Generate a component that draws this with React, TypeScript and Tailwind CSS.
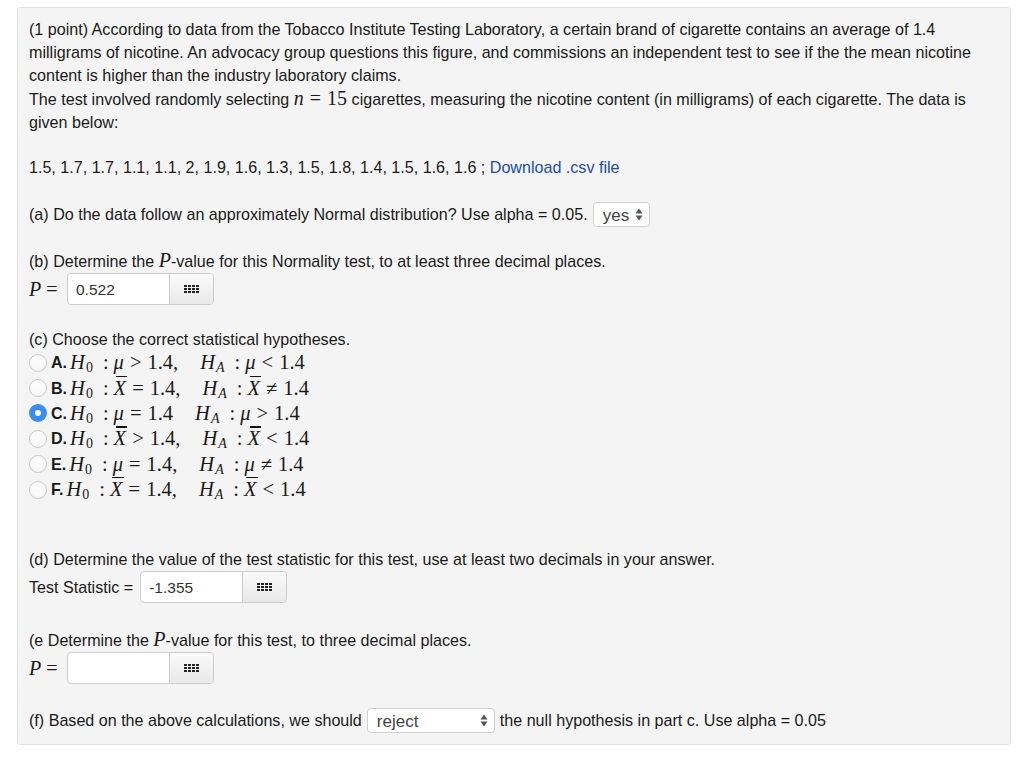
import React from 'react';

const sans = { fontFamily: '"Liberation Sans", Arial, sans-serif' };
const serif = { fontFamily: '"Liberation Serif", "Times New Roman", serif' };

function Mi({ children, bar = false }: { children: React.ReactNode; bar?: boolean }) {
  return (
    <span className={`italic ${bar ? 'relative inline-block' : ''}`}>
      {bar && <span className="absolute left-[2px] right-[-1px] top-[0px] h-[1.3px] bg-[#111]" />}
      {children}
    </span>
  );
}

function H({ sub }: { sub: string }) {
  return (
    <span className="whitespace-nowrap">
      <Mi>H</Mi>
      <sub className={`text-[14px] relative top-[3px] ml-[1px] ${sub === 'A' ? 'italic' : ''}`}>{sub}</sub>
    </span>
  );
}

function GridIcon() {
  const cols = [0, 4, 8, 12];
  const rows = [0, 3, 6];
  return (
    <svg width="15" height="8" viewBox="0 0 15 8" className="block">
      {rows.map((y) =>
        cols.map((x) => <rect key={`${x}-${y}`} x={x} y={y} width="3" height="2" fill="#222" />)
      )}
    </svg>
  );
}

function AnswerBox({ value }: { value: string }) {
  return (
    <div className="flex h-[32px] rounded-[4px] border border-[#cccccc] bg-white overflow-hidden">
      <div className="w-[101px] px-[8px] flex items-center text-[15.5px] text-[#333]">{value}</div>
      <div className="w-[44px] flex items-center justify-center border-l border-[#cccccc] bg-gradient-to-b from-[#fafafa] to-[#e9e9e9]">
        <GridIcon />
      </div>
    </div>
  );
}

function SelectArrows() {
  return (
    <svg width="8" height="13" viewBox="0 0 8 13" className="block">
      <path d="M4 0.5 L7.5 5.5 L0.5 5.5 Z" fill="#555" />
      <path d="M4 12.5 L7.5 7.5 L0.5 7.5 Z" fill="#555" />
    </svg>
  );
}

function Select({ value, width }: { value: string; width: number }) {
  return (
    <div
      className="flex items-center justify-between h-[25px] rounded-[4px] border border-[#d0d0d0] bg-white pl-[9px] pr-[6px] text-[17px] text-[#444]"
      style={{ width }}
    >
      <span className="leading-none relative top-[1px]">{value}</span>
      <SelectArrows />
    </div>
  );
}

function Radio({ checked }: { checked?: boolean }) {
  if (checked) {
    return (
      <span className="w-[18px] h-[18px] rounded-full bg-[#3b8cf5] flex items-center justify-center shrink-0">
        <span className="w-[6px] h-[6px] rounded-full bg-white" />
      </span>
    );
  }
  return <span className="w-[18px] h-[18px] rounded-full border border-[#c8c8c8] bg-gradient-to-b from-white to-[#f6f6f6] shrink-0" />;
}

type Side = { v: 'mu' | 'xbar'; op: string; num: string };
type Option = { letter: string; checked?: boolean; h0: Side; ha: Side };

const options: Option[] = [
  { letter: 'A.', h0: { v: 'mu', op: '>', num: '1.4,' }, ha: { v: 'mu', op: '<', num: '1.4' } },
  { letter: 'B.', h0: { v: 'xbar', op: '=', num: '1.4,' }, ha: { v: 'xbar', op: '≠', num: '1.4' } },
  { letter: 'C.', checked: true, h0: { v: 'mu', op: '=', num: '1.4' }, ha: { v: 'mu', op: '>', num: '1.4' } },
  { letter: 'D.', h0: { v: 'xbar', op: '>', num: '1.4,' }, ha: { v: 'xbar', op: '<', num: '1.4' } },
  { letter: 'E.', h0: { v: 'mu', op: '=', num: '1.4,' }, ha: { v: 'mu', op: '≠', num: '1.4' } },
  { letter: 'F.', h0: { v: 'xbar', op: '=', num: '1.4,' }, ha: { v: 'xbar', op: '<', num: '1.4' } },
];

function Hypothesis({ sub, side }: { sub: string; side: Side }) {
  return (
    <span className="whitespace-nowrap">
      <H sub={sub} />
      <span className="ml-[10px] mr-[5px]">:</span>
      {side.v === 'mu' ? <Mi>μ</Mi> : <Mi bar>X</Mi>}
      <span className="mx-[6px]">{side.op}</span>
      {side.num}
    </span>
  );
}

export default function App() {
  return (
    <div className="min-h-[758px] bg-white pt-[7px] pl-[17px]" style={sans}>
      <div className="w-[994px] h-[738px] rounded-[3px] border border-[#e2e2e2] bg-[#f4f4f4] pl-[11px] pt-[10px] text-[16.1px] leading-[23px] text-[#1a1a1a]">
        {/* problem statement */}
        <div className="whitespace-nowrap">
          <div>(1 point) According to data from the Tobacco Institute Testing Laboratory, a certain brand of cigarette contains an average of 1.4</div>
          <div>milligrams of nicotine. An advocacy group questions this figure, and commissions an independent test to see if the the mean nicotine</div>
          <div>content is higher than the industry laboratory claims.</div>
          <div>
            The test involved randomly selecting{' '}
            <span className="text-[20px]" style={serif}>
              <Mi>n</Mi>
              <span className="mx-[6px]">=</span>15
            </span>{' '}
            cigarettes, measuring the nicotine content (in milligrams) of each cigarette. The data is
          </div>
          <div>given below:</div>
        </div>

        <div className="mt-[22px]">
          1.5, 1.7, 1.7, 1.1, 1.1, 2, 1.9, 1.6, 1.3, 1.5, 1.8, 1.4, 1.5, 1.6, 1.6 ;{' '}
          <span className="text-[#1d4fa3]">Download .csv file</span>
        </div>

        {/* (a) */}
        <div className="mt-[23px] flex items-center h-[25px] gap-[5px]">
          <span>(a) Do the data follow an approximately Normal distribution? Use alpha = 0.05.</span>
          <Select value="yes" width={57} />
        </div>

        {/* (b) */}
        <div className="mt-[22px]">
          (b) Determine the{' '}
          <span className="text-[20px] italic" style={serif}>P</span>-value for this Normality test, to at least three decimal places.
        </div>
        <div className="flex items-center gap-[5px]">
          <span className="text-[20px] w-[33px] whitespace-nowrap" style={serif}>
            <Mi>P</Mi>
            <span className="ml-[5px]">=</span>
          </span>
          <AnswerBox value="0.522" />
        </div>

        {/* (c) */}
        <div className="mt-[23px]">(c) Choose the correct statistical hypotheses.</div>
        <div className="-mt-[1px]">
          {options.map((o) => (
            <div key={o.letter} className="flex items-center h-[25.4px] overflow-visible">
              <Radio checked={o.checked} />
              <span className="font-bold ml-[4px]">{o.letter}</span>
              <span className="ml-[3px] text-[20.5px] leading-[25px]" style={serif}>
                <Hypothesis sub="0" side={o.h0} />
                <span className="ml-[22px]">
                  <Hypothesis sub="A" side={o.ha} />
                </span>
              </span>
            </div>
          ))}
        </div>

        {/* (d) */}
        <div className="mt-[46px]">
          (d) Determine the value of the test statistic for this test, use at least two decimals in your answer.
        </div>
        <div className="flex items-center gap-[7px]">
          <span>Test Statistic =</span>
          <AnswerBox value="-1.355" />
        </div>

        {/* (e) */}
        <div className="mt-[25px]">
          (e Determine the{' '}
          <span className="text-[20px] italic" style={serif}>P</span>-value for this test, to three decimal places.
        </div>
        <div className="flex items-center gap-[5px]">
          <span className="text-[20px] w-[33px] whitespace-nowrap" style={serif}>
            <Mi>P</Mi>
            <span className="ml-[5px]">=</span>
          </span>
          <AnswerBox value="" />
        </div>

        {/* (f) */}
        <div className="mt-[24px] flex items-center h-[25px] gap-[5px]">
          <span>(f) Based on the above calculations, we should</span>
          <Select value="reject" width={128} />
          <span>the null hypothesis in part c. Use alpha = 0.05</span>
        </div>
      </div>
    </div>
  );
}
